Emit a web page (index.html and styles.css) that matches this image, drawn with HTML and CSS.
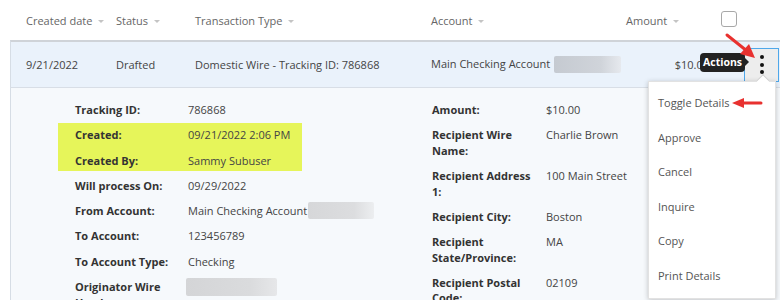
FILE: index.html
```html
<!DOCTYPE html>
<html lang="en">
<head>
  <meta charset="UTF-8" />
  <title>Transactions</title>
  <link rel="stylesheet" href="styles.css">
</head>
<body>

  <div class="table">
    <div class="head">
      <div class="col">Created date <span class="caret"></span></div>
      <div class="col">Status <span class="caret"></span></div>
      <div class="col">Transaction Type <span class="caret"></span></div>
      <div class="col">Account <span class="caret"></span></div>
      <div class="col">Amount <span class="caret"></span></div>
      <div class="col"><span class="checkbox"></span></div>
    </div>

    <div class="row">
      <div class="col">9/21/2022</div>
      <div class="col">Drafted</div>
      <div class="col">Domestic Wire - Tracking ID: 786868</div>
      <div class="col">Main Checking Account <span class="blur blur-acct"></span></div>
      <div class="col amount">$10.00</div>
      <div class="col">
        <button class="kebab" aria-label="Actions"><span></span><span></span><span></span></button>
      </div>
      <div class="tooltip">Actions</div>
    </div>

    <div class="details">
      <div class="detail-col left">
        <div class="item"><span class="label">Tracking ID:</span><span class="value">786868</span></div>
        <div class="highlight">
          <div class="item"><span class="label">Created:</span><span class="value">09/21/2022 2:06 PM</span></div>
          <div class="item"><span class="label">Created By:</span><span class="value">Sammy Subuser</span></div>
        </div>
        <div class="item"><span class="label">Will process On:</span><span class="value">09/29/2022</span></div>
        <div class="item"><span class="label">From Account:</span><span class="value">Main Checking Account<span class="blur blur-from"></span></span></div>
        <div class="item"><span class="label">To Account:</span><span class="value">123456789</span></div>
        <div class="item"><span class="label">To Account Type:</span><span class="value">Checking</span></div>
        <div class="item"><span class="label">Originator Wire Header:</span><span class="value"><span class="blur blur-header"></span></span></div>
      </div>
      <div class="detail-col right">
        <div class="item"><span class="label">Amount:</span><span class="value">$10.00</span></div>
        <div class="item"><span class="label">Recipient Wire Name:</span><span class="value">Charlie Brown</span></div>
        <div class="item"><span class="label">Recipient Address 1:</span><span class="value">100 Main Street</span></div>
        <div class="item"><span class="label">Recipient City:</span><span class="value">Boston</span></div>
        <div class="item"><span class="label">Recipient State/Province:</span><span class="value">MA</span></div>
        <div class="item"><span class="label">Recipient Postal Code:</span><span class="value">02109</span></div>
      </div>
    </div>

    <ul class="menu">
      <li>Toggle Details</li>
      <li>Approve</li>
      <li>Cancel</li>
      <li>Inquire</li>
      <li>Copy</li>
      <li>Print Details</li>
    </ul>

    <!-- annotation arrows -->
    <svg class="arrows" width="780" height="300" viewBox="0 0 780 300">
      <line x1="727" y1="35" x2="747" y2="51" stroke="#e8312f" stroke-width="3" stroke-linecap="round"/>
      <polygon points="755,58 740,54 749,44" fill="#e8312f"/>
      <line x1="761" y1="103" x2="742" y2="103" stroke="#e8312f" stroke-width="3" stroke-linecap="round"/>
      <polygon points="732,103 744,98 744,108" fill="#e8312f"/>
    </svg>
  </div>

</body>
</html>
```

FILE: styles.css
```css
body {
  margin: 0;
  font-family: "Open Sans", Arial, sans-serif;
  font-size: 11px;
  color: #444;
  background: #fff;
}

.table {
  position: relative;
  width: 780px;
  height: 300px;
  overflow: hidden;
  padding-left: 10px;
  box-sizing: border-box;
}

.head, .row {
  display: grid;
  grid-template-columns: 90px 79px 236px 195px 95px 1fr;
  align-items: center;
  padding-left: 16px;
}

.head {
  height: 40px;
  color: #666;
}

.caret {
  display: inline-block;
  width: 0;
  height: 0;
  border-left: 3.5px solid transparent;
  border-right: 3.5px solid transparent;
  border-top: 3.5px solid #c4c4c4;
  margin-left: 3px;
  vertical-align: middle;
}

.checkbox {
  display: block;
  width: 14px;
  height: 14px;
  border: 1px solid #a8a8a8;
  border-radius: 3px;
  margin-top: -2px;
}

.row {
  position: relative;
  height: 45px;
  background: #eaf2fb;
  border-top: 2px solid #cfd3d8;
  border-bottom: 1px solid #d8dee6;
  border-left: 1px solid #d6dde5;
  padding-left: 15px;
}

.row .col {
  white-space: nowrap;
}

.amount {
  text-align: right;
  padding-right: 12px;
  margin-left: -20px;
}

.blur {
  display: inline-block;
  vertical-align: top;
  border-radius: 2px;
}

.blur-acct {
  width: 67px;
  height: 17px;
  background: linear-gradient(90deg, #c5cad1, #d0d4da 70%, #e6e9ee);
  margin-left: 1px;
}

.blur-from {
  width: 66px;
  height: 17px;
  background: linear-gradient(90deg, #d6d7d9, #dcdddf 70%, #eceef0);
  margin: -1px 0 -1px 1px;
}

.blur-header {
  width: 91px;
  height: 18px;
  background: linear-gradient(90deg, #d4d5d7, #dadbdd 70%, #e6e7e9);
  margin: -1px 0 -2px -2px;
}

.kebab {
  display: flex;
  flex-direction: column;
  align-items: center;
  justify-content: center;
  gap: 3.5px;
  width: 35px;
  height: 34px;
  margin-left: 23px;
  background: #ededed;
  border: 1px solid #4ea7ea;
  padding: 0;
}

.kebab span {
  width: 4px;
  height: 4px;
  border-radius: 50%;
  background: #111;
}

.tooltip {
  position: absolute;
  left: 689px;
  top: 11px;
  background: #222;
  color: #fff;
  font-weight: bold;
  font-size: 10.5px;
  line-height: 19px;
  padding: 0 3px;
  border-radius: 4px;
}

.tooltip::after {
  content: "";
  position: absolute;
  right: -4px;
  top: 5px;
  border-top: 4.5px solid transparent;
  border-bottom: 4.5px solid transparent;
  border-left: 4.5px solid #222;
}

.details {
  display: flex;
  height: 240px;
  background: #f6f9fc;
  border-left: 1px solid #d6dde5;
  padding: 14px 0 0 64px;
  line-height: 15.5px;
}

.detail-col {
  display: flex;
  flex-direction: column;
  gap: 9.8px;
}

.detail-col.left {
  width: 357px;
}

.highlight {
  display: flex;
  flex-direction: column;
  gap: 9.8px;
  background: #e6f55a;
  margin: -4px 0 -3px -17px;
  padding: 4px 0 3px 17px;
  width: 227px;
}

.item {
  display: flex;
}

.label {
  font-weight: bold;
  color: #333;
  flex: none;
}

.left .label {
  width: 113px;
}

.right .label {
  width: 114px;
  padding-right: 10px;
  box-sizing: border-box;
}

.value {
  color: #444;
  white-space: nowrap;
}

.menu {
  position: absolute;
  left: 648px;
  top: 81px;
  width: 126px;
  margin: 0;
  padding: 4px 0 0;
  list-style: none;
  background: #fff;
  border: 1px solid #e2e2e2;
  box-shadow: 0 1px 5px rgba(0, 0, 0, 0.22);
  height: 212px;
  color: #555;
}

.menu::before {
  content: "";
  position: absolute;
  left: 109px;
  top: -6px;
  width: 9px;
  height: 9px;
  background: #fff;
  border-left: 1px solid #cfcfcf;
  border-top: 1px solid #cfcfcf;
  transform: rotate(45deg);
}

.menu li {
  height: 34.5px;
  line-height: 34.5px;
  padding-left: 9px;
}

.arrows {
  position: absolute;
  left: 0;
  top: 0;
  pointer-events: none;
}
```
